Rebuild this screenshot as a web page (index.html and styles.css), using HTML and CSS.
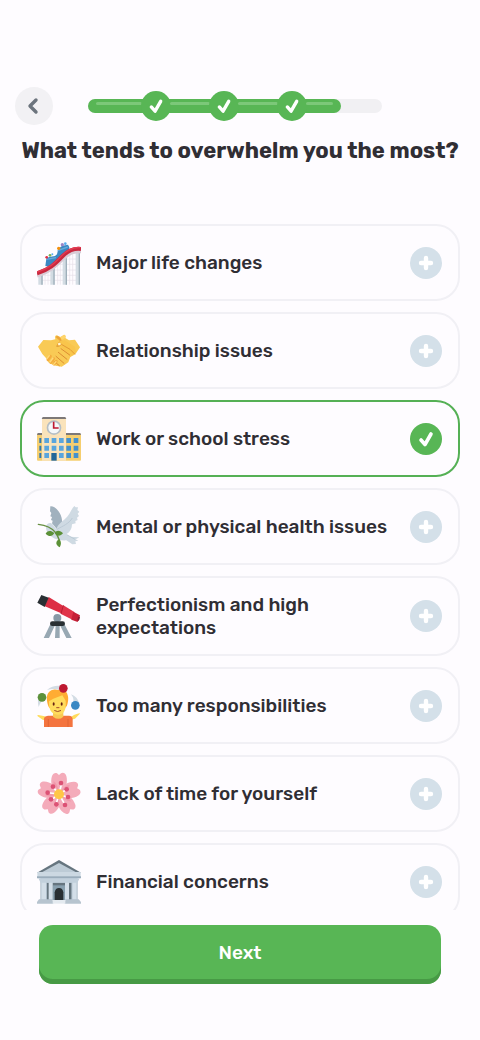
FILE: index.html
```
<!DOCTYPE html>
<html lang="en">
<head>
    <meta charset="UTF-8">
    <meta name="viewport" content="width=device-width, initial-scale=1.0">
    <title>What tends to overwhelm you the most?</title>
    <link rel="stylesheet" href="styles.css">
</head>
<body>
    <!-- Shared icons -->
    <svg class="sprite" aria-hidden="true">
        <symbol id="check" viewBox="0 0 32 32">
            <path d="M11 17l4 4.500L21 11" fill="none" stroke="#fff" stroke-width="3.600" stroke-linecap="round" stroke-linejoin="round"/>
        </symbol>
        <symbol id="plus" viewBox="0 0 32 32">
            <path d="M16 11v10M11 16h10" fill="none" stroke="#fff" stroke-width="4.400" stroke-linecap="round"/>
        </symbol>
        <symbol id="petal" viewBox="0 0 132 132">
            <path d="M66 68C44 54 39 30 45 12C48 3 56 1 60 4L66 9L72 4C78 0 85 3 88 12C93 30 88 54 66 68Z" fill="#f4abba"/>
            <path d="M64 62C52 50 47 38 50 27C58 34 65 46 64 62Z" fill="#ea7f96" opacity=".4"/>
        </symbol>
    </svg>

    <header class="header">
        <button class="back" type="button" aria-label="Back">
            <svg viewBox="0 0 38 38"><path d="M21 13L15 19l6 6" fill="none" stroke="#6c747d" stroke-width="3.400" stroke-linecap="round" stroke-linejoin="round"/></svg>
        </button>
        <div class="progress" role="progressbar" aria-label="Progress" aria-valuenow="86" aria-valuemin="0" aria-valuemax="100">
            <div class="fill">
                <div class="segment"><svg class="node"><use href="#check"/></svg></div>
                <div class="segment"><svg class="node"><use href="#check"/></svg></div>
                <div class="segment"><svg class="node"><use href="#check"/></svg></div>
                <div class="segment last"></div>
            </div>
        </div>
    </header>

    <h1>What tends to overwhelm you the most?</h1>

    <form class="quiz">
        <div class="options">
            <label class="option">
                <svg class="icon" viewBox="0 0 132 132">
                    <path d="M24 82V131M33 76V131M62 52V131M70 46V131M98 34V131M107 32V131M5 118H128M12 103H128M30 87H128M50 70H128M68 54H128" stroke="#e6dfe9" stroke-width="2" fill="none"/>
                    <path d="M4 105L17 98V131H4ZM40 80L53 70V131H40ZM77 48L90 39V131H77ZM116 32H129V131H116Z" fill="#d3dce3"/>
                    <path d="M13 100h4v31h-4ZM49 73h4v58h-4ZM86 42h4v89h-4ZM125 32h4v99h-4Z" fill="#9eafba"/>
                    <path d="M25 75L28 53L36 48L54 45L60 40L64 23L76 14L93 11L97 19L96 28L65 53L37 77Z" fill="#3b88c3"/>
                    <path d="M28 55L57 50M62 29L92 18" stroke="#66a9dc" stroke-width="4"/>
                    <circle cx="29" cy="49" r="4" fill="#dd2e44"/><circle cx="39" cy="43" r="4" fill="#77b255"/><circle cx="46" cy="40" r="3" fill="#55acee"/>
                    <circle cx="65" cy="22" r="5" fill="#f4900c"/><circle cx="76" cy="11" r="5" fill="#9a86c8"/><circle cx="85" cy="8" r="4" fill="#55acee"/>
                    <path d="M0 103C38 91 53 77 78 52C101 31 114 30 132 30" stroke="#d9cbd5" stroke-width="13" fill="none"/>
                    <path d="M0 97C37 85 53 70 77 45C98 24 115 22 132 24" stroke="#c9283e" stroke-width="12" fill="none"/>
                    <path d="M1 93C37 81 51 68 74 44C96 22 114 18 131 20" stroke="#e23c54" stroke-width="4" fill="none"/>
                </svg>
                <span class="text">Major life changes</span>
                <span class="mark"><input type="checkbox" name="stress"><svg class="plus"><use href="#plus"/></svg><svg class="tick"><use href="#check"/></svg></span>
            </label>

            <label class="option">
                <svg class="icon" viewBox="0 0 132 132">
                    <path d="M3 53L19 33L42 34L55 31L54 23Q58 16 64 21L70 24L82 17Q88 19 85 27L96 34L114 32L129 55L115 76L100 84L94 100L82 108L74 113L56 110L44 106L34 100L29 89L16 75Z" fill="#f9ca55"/>
                    <path d="M56 24Q60 18 66 23L77 33L69 36Z" fill="#eda43a"/>
                    <path d="M70 25L81 17Q88 19 84 27L74 34Z" fill="#ffd46a"/>
                    <path d="M61 42L69 37L83 34L114 53L117 70L100 83L85 67L68 49L61 53Z" fill="#f9c54c"/>
                    <path d="M67 39L59 52Q67 54 73 46L99 61L113 75" stroke="#e39b36" stroke-width="3" fill="none" stroke-linecap="round" stroke-linejoin="round"/>
                    <path d="M72 59L98 78M64 70L90 91M57 82L81 103M48 94L67 110" stroke="#dd8e32" stroke-width="3" stroke-linecap="round"/>
                    <path d="M33 92L40 82M41 100L50 89M51 105L58 97" stroke="#f4ad3f" stroke-width="9" stroke-linecap="round"/>
                    <path d="M30 89L37 80M39 99L48 87M50 106L57 98" stroke="#ffda78" stroke-width="4" stroke-linecap="round"/>
                    <circle cx="67" cy="45" r="4" fill="#fff5d5"/>
                </svg>
                <span class="text">Relationship issues</span>
                <span class="mark"><input type="checkbox" name="stress"><svg class="plus"><use href="#plus"/></svg><svg class="tick"><use href="#check"/></svg></span>
            </label>

            <label class="option">
                <svg class="icon" viewBox="0 0 132 132">
                    <path d="M0 53Q0 50 3 50H129Q132 50 132 53V128Q132 131 129 131H3Q0 131 0 128Z" fill="#f5ce70"/>
                    <path d="M2 48H16V54H0ZM87 48H130L132 54H87Z" fill="#7d7878"/>
                    <path d="M15 5H87V131H15Z" fill="#fae3bb"/>
                    <path d="M17 0H85L88 6H14Z" fill="#7d7878"/>
                    <circle cx="51" cy="32" r="22" fill="#b5bec5"/>
                    <circle cx="51" cy="32" r="17" fill="#f5f8fa"/>
                    <path d="M50 14V33H65" stroke="#be1931" stroke-width="5" fill="none"/>
                    <path d="M7 63h6v15H7ZM7 86h6v15H7ZM7 108h6v15H7Z" fill="#3478ae"/>
                    <path d="M22 63h14v15H22ZM44 63h14v15H44ZM66 63h14v15H66ZM22 86h14v15H22ZM44 86h14v15H44ZM66 86h14v15H66ZM22 108h14v15H22ZM66 108h14v15H66Z" fill="#5aa5dd"/>
                    <path d="M88 63h14v15H88ZM110 63h14v15h-14ZM88 86h14v15H88ZM110 86h14v15h-14ZM88 108h14v15H88ZM110 108h14v15h-14Z" fill="#4391ce"/>
                    <path d="M43 108H59V131H43Z" fill="#226699"/>
                </svg>
                <span class="text">Work or school stress</span>
                <span class="mark"><input type="checkbox" name="stress" checked><svg class="plus"><use href="#plus"/></svg><svg class="tick"><use href="#check"/></svg></span>
            </label>

            <label class="option">
                <svg class="icon" viewBox="0 0 132 132">
                    <path d="M40 4C51 3 61 12 68 24C76 38 77 53 74 68L60 73L45 55L47 47L42 45L45 36L40 34L43 24L39 19Z" fill="#a1b1be"/>
                    <path d="M58 73C63 57 75 50 84 42C99 29 102 13 112 3L116 7L123 7L121 15L127 20L122 26L126 33L120 38L122 45L115 48L116 55L105 58L104 67C100 80 93 85 88 88L99 95L127 97L116 103L124 107L115 109L117 117L106 118L88 106C74 107 55 104 44 95C32 86 24 74 28 63C30 54 42 50 48 59Z" fill="#cfdae3"/>
                    <path d="M60 73C77 63 95 57 106 39M89 89L114 103" stroke="#bccad6" stroke-width="3" fill="none"/>
                    <path d="M4 58C27 61 46 71 54 81Q62 91 68 108" fill="none" stroke="#689043" stroke-width="4" stroke-linecap="round"/>
                    <path d="M52 84C40 73 29 78 26 86C35 95 46 96 52 84ZM54 84C58 73 72 77 78 85C70 95 60 95 54 84ZM68 127C53 119 57 108 66 103C75 111 72 121 68 127Z" fill="#5c9138"/>
                </svg>
                <span class="text">Mental or physical health issues</span>
                <span class="mark"><input type="checkbox" name="stress"><svg class="plus"><use href="#plus"/></svg><svg class="tick"><use href="#check"/></svg></span>
            </label>

            <label class="option">
                <svg class="icon" viewBox="0 0 132 132">
                    <path d="M40 91L54 94L36 132H20ZM69 94L82 90L104 132H88ZM56 91H68V132H54Z" fill="#98a8b3"/>
                    <circle cx="61" cy="72" r="12" fill="#8899a6"/>
                    <rect x="39" y="82" width="45" height="14" rx="7" fill="#292f33"/>
                    <path d="M35 9L83 38L76 59L22 36Z" fill="#dd2e44"/>
                    <path d="M79 34L112 54L108 78L72 60Z" fill="#e0344a"/>
                    <path d="M109 53L129 64L122 84L103 77Z" fill="#c62037"/>
                    <path d="M13 3L35 11L23 39L1 26Z" fill="#292f33"/>
                    <path d="M79 34L72 60" stroke="#b71f34" stroke-width="3"/>
                    <ellipse cx="125" cy="74" rx="3" ry="7" transform="rotate(20 125 74)" fill="#8d1730"/>
                </svg>
                <span class="text">Perfectionism and high expectations</span>
                <span class="mark"><input type="checkbox" name="stress"><svg class="plus"><use href="#plus"/></svg><svg class="tick"><use href="#check"/></svg></span>
            </label>

            <label class="option">
                <svg class="icon" viewBox="0 0 132 132">
                    <path d="M5 69Q0 49 6 35L25 44Q11 50 5 69ZM30 18Q52 0 80 8L74 22Q55 11 30 18ZM102 31Q122 38 127 60L107 61Q114 46 102 31Z" fill="#d3dce4"/>
                    <path d="M2 97Q-1 93 4 93L23 97L34 101V109L18 108ZM98 101L111 93Q133 84 128 90L114 104L99 108Z" fill="#ffdc5d"/>
                    <path d="M21 106Q20 97 33 95H96Q107 96 107 106V129H21Z" fill="#f4743f"/>
                    <path d="M34 105V129M93 105V129" stroke="#d85d30" stroke-width="2"/>
                    <path d="M48 83H79V98Q65 111 48 98Z" fill="#f9ca55"/>
                    <path d="M30 50C26 24 44 12 63 18C85 10 99 31 92 58Q91 68 84 72H38Q32 66 30 50Z" fill="#ffac33"/>
                    <path d="M36 52L49 44L76 34L86 50Q90 92 62 92Q34 91 36 52Z" fill="#ffdc5d"/>
                    <ellipse cx="50" cy="60" rx="3" ry="5" fill="#662113"/>
                    <ellipse cx="74" cy="60" rx="3" ry="5" fill="#662113"/>
                    <path d="M59 71H66M53 80Q62 86 71 80" fill="none" stroke="#a24c2b" stroke-width="3" stroke-linecap="round"/>
                    <circle cx="15" cy="40" r="13" fill="#5c913b"/>
                    <circle cx="79" cy="13" r="13" fill="#be1931"/>
                    <circle cx="115" cy="64" r="13" fill="#3b88c3"/>
                </svg>
                <span class="text">Too many responsibilities</span>
                <span class="mark"><input type="checkbox" name="stress"><svg class="plus"><use href="#plus"/></svg><svg class="tick"><use href="#check"/></svg></span>
            </label>

            <label class="option">
                <svg class="icon" viewBox="0 0 132 132">
                    <use href="#petal"/>
                    <use href="#petal" transform="rotate(72 66 66)"/>
                    <use href="#petal" transform="rotate(144 66 66)"/>
                    <use href="#petal" transform="rotate(216 66 66)"/>
                    <use href="#petal" transform="rotate(288 66 66)"/>
                    <path d="M66 66L72 42M66 66L83 56M66 66L86 74M66 66L80 91M66 66L59 91M66 66L49 79M66 66L39 63M66 66L52 50" stroke="#fff" stroke-width="5" stroke-linecap="round"/>
                    <circle cx="66" cy="67" r="15" fill="#ffc647"/>
                    <g fill="#dc5275">
                        <circle cx="72" cy="33" r="7"/><circle cx="89" cy="52" r="7"/><circle cx="93" cy="75" r="7"/><circle cx="84" cy="99" r="7"/>
                        <circle cx="58" cy="97" r="7"/><circle cx="42" cy="82" r="7"/><circle cx="32" cy="62" r="7"/><circle cx="48" cy="44" r="7"/>
                    </g>
                </svg>
                <span class="text">Lack of time for yourself</span>
                <span class="mark"><input type="checkbox" name="stress"><svg class="plus"><use href="#plus"/></svg><svg class="tick"><use href="#check"/></svg></span>
            </label>

            <label class="option">
                <svg class="icon" viewBox="0 0 132 132">
                    <path d="M10 54H122V120H10Z" fill="#aebdca"/>
                    <path d="M30 68H38V120H30ZM94 68H103V120H94ZM46 68H85V120H46Z" fill="#66757f"/>
                    <path d="M47 76H84V120H47Z" fill="#89a0af"/>
                    <path d="M53 120V97Q55 84 66 84Q77 84 79 97V120Z" fill="#292f33"/>
                    <path d="M13 66H27V119H13ZM35 66H47V119H35ZM84 66H96V119H84ZM106 66H119V119H106Z" fill="#d3dee8"/>
                    <path d="M0 38L66 0L132 38Z" fill="#66757f"/>
                    <path d="M16 36L66 9L116 36Z" fill="#bdcbd6"/>
                    <path d="M1 36H131V50H1Z" fill="#ccd8e2"/>
                    <path d="M0 49H132V55H0Z" fill="#9aacbb"/>
                    <path d="M4 55H128L121 68H11Z" fill="#c2d0dc"/>
                    <path d="M6 118H46L49 126V131H0V126ZM86 118H125L132 126V131H83V126Z" fill="#b7c4cf"/>
                    <path d="M47 120H85V131H47Z" fill="#e4eaf0"/>
                </svg>
                <span class="text">Financial concerns</span>
                <span class="mark"><input type="checkbox" name="stress"><svg class="plus"><use href="#plus"/></svg><svg class="tick"><use href="#check"/></svg></span>
            </label>
        </div>

        <div class="footer">
            <button class="next" type="submit">Next</button>
        </div>
    </form>
</body>
</html>
```
FILE: styles.css
```
* {
    box-sizing: border-box;
}
body {
    display: flex;
    flex-direction: column;
    height: 100vh;
    margin: 0;
    background-color: #fefcff;
    color: #302e34;
    font-family: Rubik, Roboto, sans-serif;
}
.sprite {
    display: none;
}
.header {
    display: flex;
    align-items: center;
    gap: 35px;
    padding: 87px 98px 0 15px;
}
.back {
    width: 38px;
    height: 38px;
    padding: 0;
    border: none;
    border-radius: 50%;
    background-color: #f2f1f4;
    cursor: pointer;
}
.back svg {
    display: block;
}
.progress {
    flex: 1;
    border-radius: 8px;
    background-color: #f1f0f3;
}
.fill {
    display: flex;
    width: 86%;
    height: 14px;
    border-radius: 8px;
    background-color: #58b655;
}
.segment {
    position: relative;
    flex: 68;
}
.segment.last {
    flex: 49;
}
.segment::before {
    content: "";
    display: block;
    height: 3px;
    margin: 3px 14px 0;
    border-radius: 2px;
    background-color: #7cc879;
}
.segment:first-child::before {
    margin-left: 8px;
}
.segment.last::before {
    margin-right: 8px;
}
.node {
    position: absolute;
    top: -8px;
    right: -15px;
    width: 30px;
    height: 30px;
    border-radius: 50%;
    background-color: #58b655;
}
h1 {
    margin: 11px 16px 0;
    font-size: 22px;
    line-height: 30px;
    font-weight: 700;
    text-align: center;
}
.quiz {
    display: flex;
    flex: 1;
    flex-direction: column;
    min-height: 0;
    margin: 0;
}
.options {
    display: flex;
    flex: 1;
    flex-direction: column;
    gap: 11px;
    min-height: 0;
    margin-top: 58px;
    padding: 0 20px;
    overflow-y: auto;
    scrollbar-width: none;
}
.option {
    display: flex;
    flex-shrink: 0;
    align-items: center;
    gap: 15px;
    min-height: 77px;
    padding: 14px 16px 14px 15px;
    border: 2px solid #f1f0f5;
    border-radius: 24px;
    cursor: pointer;
}
.option:has(input:checked) {
    border-color: #55b055;
}
.icon {
    flex-shrink: 0;
    width: 44px;
    height: 44px;
}
.text {
    flex: 1;
    padding: 1px 0;
    font-size: 19px;
    line-height: 23px;
    font-weight: 500;
}
.mark {
    display: grid;
    width: 32px;
    height: 32px;
}
.mark > * {
    grid-area: 1 / 1;
    width: 32px;
    height: 32px;
}
.mark svg {
    pointer-events: none;
}
.mark input {
    appearance: none;
    margin: 0;
    border-radius: 50%;
    background-color: #d4e0e9;
    cursor: pointer;
}
.mark input:checked {
    background-color: #58b655;
}
.mark .tick,
.mark input:checked ~ .plus {
    display: none;
}
.mark input:checked ~ .tick {
    display: block;
}
.footer {
    padding: 15px 39px 56px;
}
.next {
    display: block;
    width: 100%;
    height: 59px;
    padding: 0 0 4px;
    border: none;
    border-radius: 14px;
    background-color: #58b655;
    box-shadow: inset 0 -5px 0 #479a45;
    color: #fff;
    font: inherit;
    font-size: 19px;
    font-weight: 500;
    cursor: pointer;
}
```
